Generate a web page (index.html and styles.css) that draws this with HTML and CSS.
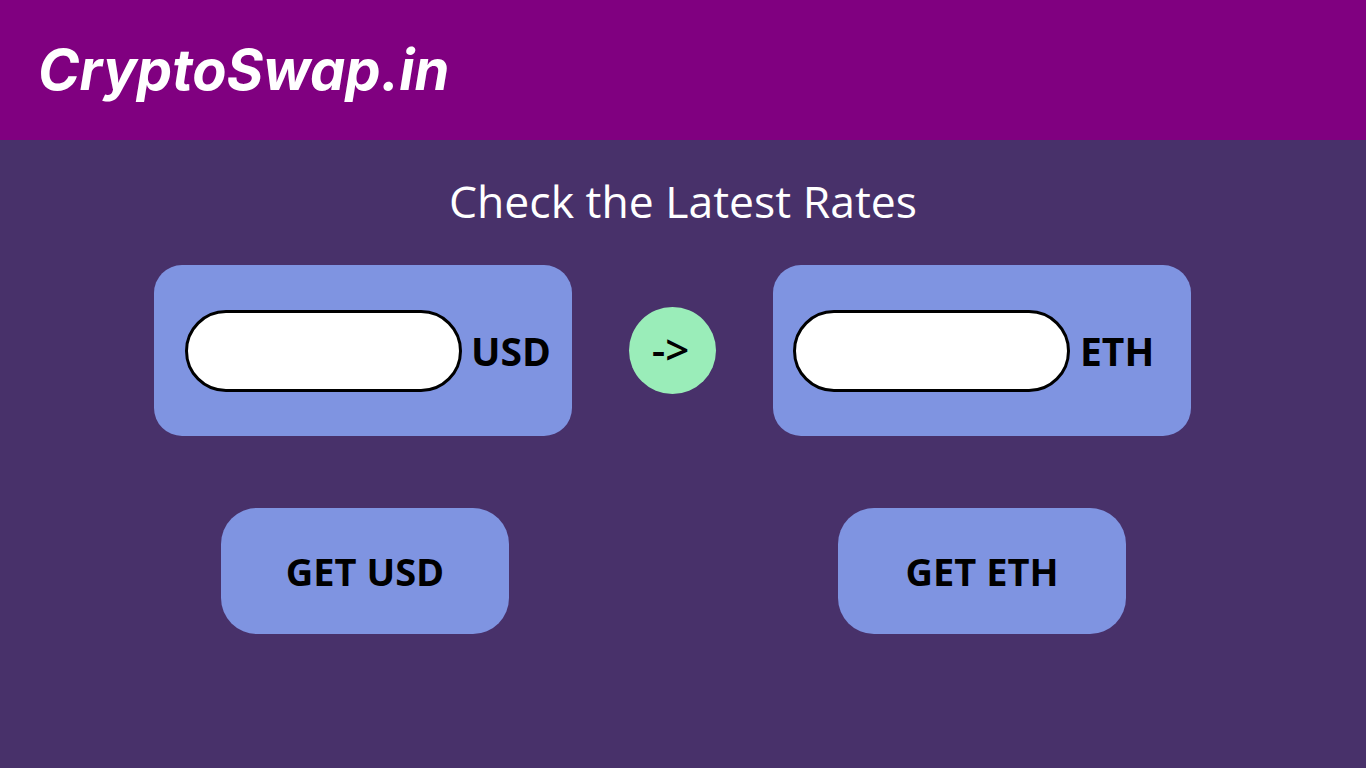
FILE: index.html
```html
<!DOCTYPE html>
<html lang="en">
<head>
<meta charset="utf-8">
<title>CryptoSwap.in</title>
<link rel="stylesheet" href="styles.css">
</head>
<body>
<header class="topbar">
  <h1 class="logo">CryptoSwap.in</h1>
</header>
<main class="content">
  <h2 class="title">Check the Latest Rates</h2>
  <div class="row">
    <div class="card card-from">
      <input class="field" type="text" aria-label="USD amount">
      <span class="unit">USD</span>
    </div>
    <div class="arrow">-&gt;</div>
    <div class="card card-to">
      <input class="field" type="text" aria-label="ETH amount">
      <span class="unit unit-to">ETH</span>
    </div>
  </div>
  <div class="row buttons">
    <button class="btn btn-from">GET USD</button>
    <span></span>
    <button class="btn">GET ETH</button>
  </div>
</main>
</body>
</html>
```

FILE: styles.css
```css
* { box-sizing: border-box; }
html, body { margin: 0; padding: 0; }
body {
  background: #48316a;
  font-family: "Open Sans", "Liberation Sans", sans-serif;
  min-height: 768px;
}
.topbar {
  background: #800080;
  height: 140px;
  display: flex;
  align-items: center;
  padding-left: 38px;
}
.logo {
  margin: 0;
  color: #fff;
  font-family: "Inter", "Open Sans", sans-serif;
  font-style: italic;
  font-weight: 700;
  font-size: 56px;
  letter-spacing: 0px;
}
.content {
  padding-top: 28px;
}
.title {
  margin: 0 0 31px 0;
  text-align: center;
  color: #fff;
  font-weight: 400;
  font-size: 44.5px;
  line-height: 66px;
}
.row {
  display: grid;
  grid-template-columns: 418px 87px 418px;
  column-gap: 57px;
  margin-left: 154px;
  align-items: center;
}
.card {
  background: #7f94e1;
  height: 171px;
  border-radius: 28px;
  display: flex;
  align-items: center;
  padding-left: 31px;
}
.card-to {
  padding-left: 20px;
}
.field {
  width: 277px;
  height: 82px;
  border: 3.5px solid #000;
  border-radius: 41px;
  background: #fff;
  outline: none;
}
.unit {
  margin-left: 9px;
  font-weight: 700;
  font-size: 39px;
  color: #000;
}
.unit-to {
  margin-left: 10px;
}
.arrow {
  width: 87px;
  height: 87px;
  border-radius: 50%;
  background: #9aedb9;
  display: flex;
  align-items: center;
  justify-content: center;
  font-weight: 600;
  font-size: 42px;
  color: #000;
  padding-bottom: 4px;
  padding-right: 4px;
}
.buttons {
  margin-top: 72px;
}
.btn {
  justify-self: center;
  width: 288px;
  height: 126px;
  border: none;
  border-radius: 36px;
  background: #7f94e1;
  font-family: "Open Sans", "Liberation Sans", sans-serif;
  font-weight: 700;
  font-size: 38px;
  color: #000;
  cursor: pointer;
}
.btn-from {
  margin-left: 4px;
}
```
